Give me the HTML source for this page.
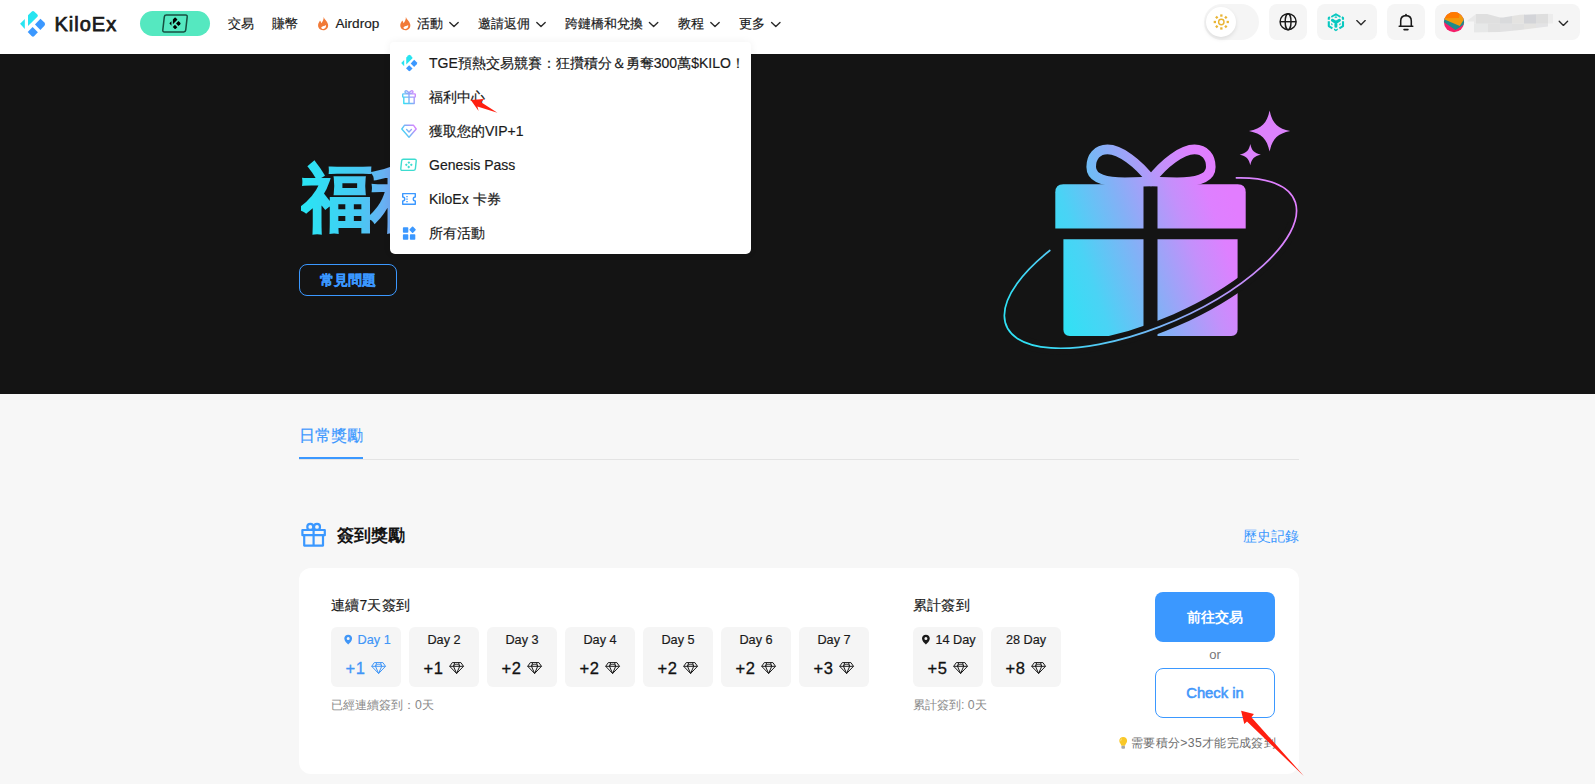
<!DOCTYPE html>
<html lang="zh-Hant">
<head>
<meta charset="utf-8">
<title>KiloEx</title>
<style>
*{box-sizing:border-box;margin:0;padding:0}
html,body{width:1595px;height:784px;overflow:hidden;background:#f7f7f7}
body{font-family:"Liberation Sans",sans-serif;color:#1a1a1a;position:relative;font-size:14px}
.abs{position:absolute}
.nav,.mi,.ct,.tile .d{-webkit-text-stroke:0.18px currentColor}
/* header */
#hdr{position:absolute;left:0;top:0;width:1595px;height:54px;background:#fff;z-index:5}
#brand{position:absolute;left:54.5px;top:12px;font-size:20px;font-weight:400;line-height:24px;color:#1a1a1a;letter-spacing:1px;-webkit-text-stroke:0.75px #1a1a1a}
#pill{position:absolute;left:140px;top:11px;width:70px;height:25px;border-radius:13px;background:#55e8c0}
.nav{position:absolute;top:14px;height:20px;line-height:20px;font-size:13px;color:#1a1a1a;white-space:nowrap}
.hbtn{position:absolute;top:4px;height:36px;border-radius:8px;background:#f5f5f5}
/* hero */
#hero{position:absolute;left:0;top:54px;width:1595px;height:340px;background:#141414}
#h1{position:absolute;left:300.5px;top:150px;font-size:71.5px;line-height:96px;font-weight:700;-webkit-text-stroke:1.7px transparent;white-space:nowrap;letter-spacing:-2.2px;background:linear-gradient(90deg,#28e6f4 0%,#48c8f3 21%,#74a8f3 33%,#d884fc 100%);-webkit-background-clip:text;background-clip:text;color:transparent}
#faq{position:absolute;left:299px;top:264px;width:98px;height:32px;border:1px solid #3b98ff;border-radius:8px;color:#3b98ff;-webkit-text-stroke:0.3px #3b98ff;font-weight:700;font-size:14px;line-height:30px;text-align:center}
/* menu */
#menu{position:absolute;left:390px;top:42px;width:361px;height:212px;background:#fff;border-radius:4px 4px 5px 5px;z-index:6;box-shadow:0 0 8px rgba(0,0,0,.06)}
.mi{position:absolute;left:39px;height:20px;line-height:20px;font-size:14px;color:#1a1a1a;white-space:nowrap}
/* content */
#tab{position:absolute;left:299px;top:425px;font-size:16px;line-height:22px;color:#3b98ff;-webkit-text-stroke:0.2px #3b98ff}
#tabu{position:absolute;left:299px;top:457px;width:64px;height:2px;background:#3b98ff}
#tabl{position:absolute;left:299px;top:459px;width:1000px;height:1px;background:#e4e4e4}
#sect{position:absolute;left:337.4px;top:523.5px;font-size:16.8px;line-height:24px;font-weight:700;color:#141414}
#hist{position:absolute;left:1243.3px;top:526.3px;font-size:14px;line-height:20px;color:#3b98ff}
#card{position:absolute;left:299px;top:568px;width:1000px;height:206px;background:#fff;border-radius:12px}
.ct{position:absolute;top:595px;font-size:14px;line-height:20px;color:#1a1a1a;letter-spacing:0.2px}
.tile{position:absolute;top:627px;width:70px;height:60px;border-radius:6px;background:#f5f5f5;text-align:center}
.tile .d{position:absolute;left:0;top:5px;width:70px;font-size:12.7px;line-height:16px;color:#1a1a1a;white-space:nowrap}
.tile .v{position:absolute;left:14.5px;top:30px;font-size:16.5px;line-height:22px;color:#111;white-space:nowrap;text-align:left;letter-spacing:0.5px;-webkit-text-stroke:0.3px currentColor}
.tile.on .d,.tile.on .v{color:#4096f7}
.sub{position:absolute;top:697px;font-size:12.3px;line-height:16px;color:#888}
#go{position:absolute;left:1155px;top:592px;width:120px;height:50px;border-radius:8px;background:#3b98ff;color:#fff;font-weight:700;font-size:14px;line-height:50px;text-align:center}
#or{position:absolute;left:1155px;top:646px;width:120px;text-align:center;font-size:13px;line-height:18px;color:#777}
#ck{position:absolute;left:1155px;top:668px;width:120px;height:50px;border-radius:8px;border:1px solid #3b98ff;background:#fff;color:#4297fa;font-weight:400;-webkit-text-stroke:0.55px #4297fa;font-size:14.8px;line-height:48px;text-align:center}
#hint{position:absolute;left:1131px;top:735px;font-size:12.25px;letter-spacing:0.33px;line-height:16px;color:#6e6e6e;white-space:nowrap}
</style>
</head>
<body>
<div id="hdr">
  <div id="brand">KiloEx</div>
  <div id="pill"></div>
  <div class="nav" style="left:228px">交易</div>
  <div class="nav" style="left:272px">賺幣</div>
  <div class="nav" style="left:335.5px;font-size:13.6px">Airdrop</div>
  <div class="nav" style="left:417px">活動</div>
  <div class="nav" style="left:478px">邀請返佣</div>
  <div class="nav" style="left:565px">跨鏈橋和兌換</div>
  <div class="nav" style="left:678px">教程</div>
  <div class="nav" style="left:739px">更多</div>

  <div class="hbtn" style="left:1204px;width:55px;border-radius:18px"></div>
  <div class="abs" style="left:1206px;top:7px;width:30px;height:30px;border-radius:50%;background:#fff;box-shadow:0 2px 4px rgba(0,0,0,.10)"></div>
  <div class="hbtn" style="left:1269px;width:38px"></div>
  <div class="hbtn" style="left:1317px;width:60px"></div>
  <div class="hbtn" style="left:1387px;width:38px"></div>
  <div class="hbtn" style="left:1435px;width:145px"></div>
</div>

<svg id="hsvg" class="abs" style="left:0;top:0;z-index:7" width="1595" height="54" viewBox="0 0 1595 54">
  <defs>
    <g id="klogo">
      <path d="M20.1,23.7 L24.8,19 L24.8,29 Z" fill="#27e4f0"/>
      <path d="M28,15.3 L31.6,11.7 Q33,10.4 34.4,11.7 L37.4,14.6 Q38.4,15.7 37.4,16.7 L28,26 Z" fill="#27e4f0"/>
      <path d="M35,24.4 L40.4,18.8 L44.4,22.6 Q45.9,24.2 44.4,25.8 L40.4,29.9 Z" fill="#3b98ff"/>
      <path d="M27.7,31.9 L32.6,27.1 L37.9,32.3 L34.3,36 Q33,37.3 31.6,36 Z" fill="#3b98ff"/>
    </g>
    <path id="chev" d="M0.8,0.8 L5,5 L9.2,0.8" fill="none" stroke="#2a2a2a" stroke-width="1.35" stroke-linecap="round" stroke-linejoin="round"/>
    <g id="flame">
      <path d="M5.9,-0.5 C6.4,1.8 9.4,3.6 10.2,6.6 C11,10 8.6,12.6 5.4,12.6 C2.2,12.6 0,10.4 0.3,7.2 C0.5,5.2 1.6,4.4 2.2,3 C2.9,3.8 3.3,4.6 3.5,5.6 C4.8,4.2 6,2 5.9,-0.5 Z" fill="#f17a38"/>
      <path d="M8.2,7.5 C8.5,9.7 7.4,11.4 5.6,11.4 C4.2,11.4 3.3,10.6 3.5,9.6 C4.8,8.5 6.8,8.7 8.2,7.5 Z" fill="#fff"/>
    </g>
  </defs>
  <use href="#klogo"/>
  <!-- pill icon -->
  <path d="M166.4,15 L185.6,15 Q187.4,15 187.2,16.8 L185.7,30.2 Q185.5,32 183.7,32 L164.4,32 Q162.6,32 162.8,30.2 L164.3,16.8 Q164.5,15 166.4,15 Z" fill="none" stroke="#174f41" stroke-width="1.5"/>
  <g transform="translate(160.3,12.6) scale(0.45)" >
    <path d="M20.1,23.7 L24.8,19 L24.8,29 Z" fill="#000"/>
    <path d="M28,15.3 L31.6,11.7 Q33,10.4 34.4,11.7 L37.4,14.6 Q38.4,15.7 37.4,16.7 L28,26 Z" fill="#000"/>
    <path d="M35,24.4 L40.4,18.8 L44.4,22.6 Q45.9,24.2 44.4,25.8 L40.4,29.9 Z" fill="#000"/>
    <path d="M27.7,31.9 L32.6,27.1 L37.9,32.3 L34.3,36 Q33,37.3 31.6,36 Z" fill="#000"/>
  </g>
  <use href="#flame" x="317.8" y="17.6"/>
  <use href="#flame" x="400" y="17.6"/>
  <use href="#chev" x="449" y="21.6"/>
  <use href="#chev" x="536" y="21.6"/>
  <use href="#chev" x="648.6" y="21.6"/>
  <use href="#chev" x="710" y="21.6"/>
  <use href="#chev" x="770.8" y="21.6"/>
  <!-- sun -->
  <g fill="#e9b433">
    <circle cx="1221.3" cy="22" r="2.7" fill="none" stroke="#e9b433" stroke-width="1.4"/>
    <rect x="1220.20" y="14.40" width="2.3" height="2.3"/><rect x="1220.20" y="27.30" width="2.3" height="2.3"/>
    <rect x="1213.70" y="20.85" width="2.3" height="2.3"/><rect x="1226.60" y="20.85" width="2.3" height="2.3"/>
    <rect x="1215.60" y="16.30" width="2.3" height="2.3" transform="rotate(45 1216.75 17.45)"/>
    <rect x="1224.70" y="16.30" width="2.3" height="2.3" transform="rotate(45 1225.85 17.45)"/>
    <rect x="1215.60" y="25.40" width="2.3" height="2.3" transform="rotate(45 1216.75 26.55)"/>
    <rect x="1224.70" y="25.40" width="2.3" height="2.3" transform="rotate(45 1225.85 26.55)"/>
  </g>
  <!-- globe -->
  <g fill="none" stroke="#1a1a1a" stroke-width="1.45">
    <circle cx="1288.1" cy="21.7" r="8"/>
    <ellipse cx="1288.1" cy="21.7" rx="2.9" ry="8"/>
    <path d="M1280.1,21.7 H1296.1"/>
  </g>
  <!-- bnb cube -->
  <g transform="translate(1335.9,21.8)" fill="none" stroke="#08c8c0" stroke-width="2.1" stroke-linejoin="round" stroke-linecap="butt">
    <path d="M-3.9,-5.3 L0,-7.6 L3.9,-5.3" stroke-width="1.9" stroke-linecap="round"/>
    <path d="M-7.1,-2 V-4 L-6,-4.7"/>
    <path d="M7.1,-2 V-4 L6,-4.7"/>
    <path d="M-7.1,-0.5 V4.3 L-3.5,6.5"/>
    <path d="M7.1,-0.5 V4.3 L3.5,6.5"/>
    <path d="M-3.5,-1.5 L0,0.6 L3.5,-1.5 M0,0.6 V4.4" stroke-width="3" stroke-linecap="round"/>
    <path d="M-1.2,-4.6 L0,-5.3 L1.2,-4.6 L0,-4.1 Z" fill="#08c8c0" stroke-width="0.5"/>
    <path d="M-1.9,6.7 L0,7.8 L1.9,6.7 V8.3 L0,9.4 L-1.9,8.3 Z" fill="#08c8c0" stroke="none"/>
    <ellipse cx="-4.1" cy="2.4" rx="0.7" ry="1.1" fill="#08c8c0" stroke="none" transform="rotate(-25 -4.1 2.4)"/>
    <ellipse cx="4.1" cy="2.4" rx="0.7" ry="1.1" fill="#08c8c0" stroke="none" transform="rotate(25 4.1 2.4)"/>
  </g>
  <use href="#chev" x="1356" y="19.8"/>
  <!-- bell -->
  <g fill="none" stroke="#1a1a1a" stroke-width="1.55" stroke-linecap="round" stroke-linejoin="round">
    <path d="M1399.2,26.3 H1412.8 M1400.7,26 V21 C1400.7,17.6 1403,15.6 1406,15.6 C1409,15.6 1411.3,17.6 1411.3,21 V26"/>
    <path d="M1406,15.4 V14.6"/>
    <path d="M1404,29.6 H1408"/>
  </g>
  <!-- avatar -->
  <clipPath id="avc"><circle cx="1454" cy="22.1" r="10.1"/></clipPath>
  <g clip-path="url(#avc)">
    <rect x="1443" y="11" width="23" height="23" fill="#f5206b"/>
    <path d="M1443,18 H1466 V22 L1464,24.6 L1455.4,29.9 L1443,21.4 Z" fill="#1f8a8c"/>
    <path d="M1440,8 H1468 V15 L1463.9,19.6 L1459.8,26 L1444,19.2 H1440 Z" fill="#f29a0c"/>
    <path d="M1440,8 H1459.7 L1459.5,13.8 L1459,18 L1444,18.2 H1440 Z" fill="#ff7a00"/>
  </g>
  <use href="#chev" x="1558.4" y="20.4"/>
  <!-- blurred address -->
  <clipPath id="blc"><path d="M1467.5,20.5 L1476,14 L1487,14 L1500,17.5 L1503,17.5 L1520,14.8 L1548,13.8 L1553,14 L1553,23.6 L1548,23.8 L1548,26.5 L1520,30 L1500,32 L1474,32.4 L1474,21.6 L1467.5,21.6 Z"/></clipPath>
  <g clip-path="url(#blc)">
    <rect x="1467" y="13.5" width="9" height="10.3" fill="#e9e9e9"/>
    <rect x="1476" y="13.5" width="24" height="10.3" fill="#dfdfdf"/>
    <rect x="1500" y="13.5" width="12" height="10.3" fill="#d9dadc"/>
    <rect x="1512" y="13.5" width="12" height="10.3" fill="#e4e3e1"/>
    <rect x="1524" y="13.5" width="12" height="10.3" fill="#d3d4d8"/>
    <rect x="1536" y="13.5" width="12" height="10.3" fill="#dedede"/>
    <rect x="1548" y="13.5" width="5" height="10.3" fill="#ececec"/>
    <rect x="1474" y="23.8" width="14" height="9" fill="#e7e8e8"/>
    <rect x="1488" y="23.8" width="12" height="9" fill="#e0e0e0"/>
    <rect x="1500" y="23.8" width="12" height="9" fill="#e1e1e2"/>
    <rect x="1512" y="23.8" width="12" height="9" fill="#e0e0e0"/>
    <rect x="1524" y="23.8" width="12" height="9" fill="#e4e3e1"/>
    <rect x="1536" y="23.8" width="12" height="9" fill="#e3e3e5"/>
  </g>
</svg>

<div id="hero">
</div>

<svg id="art" class="abs" style="left:980px;top:90px" width="340" height="290" viewBox="980 90 340 290">
  <defs>
    <linearGradient id="gg" gradientUnits="userSpaceOnUse" x1="1050" y1="322" x2="1250" y2="250">
      <stop offset="0" stop-color="#2ae5f4"/><stop offset="0.25" stop-color="#4ad3f5"/><stop offset="0.5" stop-color="#84b0f6"/><stop offset="0.75" stop-color="#c490fb"/><stop offset="0.9" stop-color="#de80ff"/><stop offset="1" stop-color="#e27dff"/>
    </linearGradient>
    <linearGradient id="rg" gradientUnits="userSpaceOnUse" x1="1030" y1="350" x2="1290" y2="215">
      <stop offset="0" stop-color="#2fe0f4"/><stop offset="0.42" stop-color="#74b6f6"/><stop offset="0.73" stop-color="#c090fa"/><stop offset="1" stop-color="#e07fff"/>
    </linearGradient>
  </defs>
  <!-- bow -->
  <g fill="none" stroke="url(#gg)" stroke-width="9.6" stroke-linejoin="round" stroke-linecap="round">
    <path d="M1151,180 C1138,163 1120,149.4 1107.5,149.4 C1097,149.4 1091.2,157 1091.2,167 C1091.2,178 1103,182.2 1125,182.2 L1151,181.5"/>
    <path d="M1151,180 C1164,163 1182,149.4 1194.5,149.4 C1205,149.4 1210.8,157 1210.8,167 C1210.8,178 1199,182.2 1177,182.2 L1151,181.5"/>
  </g>
  <!-- lid -->
  <path d="M1055.3,228.6 V192.2 Q1055.3,184.2 1063.3,184.2 H1143.5 V228.6 Z" fill="url(#gg)"/>
  <path d="M1157.5,228.6 V184.2 H1237.7 Q1245.7,184.2 1245.7,192.2 V228.6 Z" fill="url(#gg)"/>
  <!-- body -->
  <path d="M1063.4,239.2 H1143.5 V336 H1069.8 Q1063.4,336 1063.4,329.6 Z" fill="url(#gg)"/>
  <path d="M1157.5,239.2 H1237.6 V329.6 Q1237.6,336 1231.2,336 H1157.5 Z" fill="url(#gg)"/>
  <!-- front dark band -->
  <path d="M1294.3,223.2 A157.2,62.4 -23.7 0 1 1023.8,341.9" fill="none" stroke="#141414" stroke-width="12.4"/>
  <!-- ring -->
  <path d="M1236.4,177.9 A157.2,62.4 -23.7 1 1 1049.8,250.5" fill="none" stroke="url(#rg)" stroke-width="1.7" stroke-linecap="round"/>
  <!-- sparkles -->
  <path d="M1269.6,110.4 C1272.3,123.2 1277.4,128.3 1290.2,131 C1277.4,133.7 1272.3,138.8 1269.6,151.6 C1266.9,138.8 1261.8,133.7 1249.0,131 C1261.8,128.3 1266.9,123.2 1269.6,110.4 Z" fill="#dc82fc"/>
  <path d="M1250.3,144.1 C1251.7,150.7 1254.3,153.3 1260.9,154.7 C1254.3,156.1 1251.7,158.7 1250.3,165.3 C1248.9,158.7 1246.3,156.1 1239.7,154.7 C1246.3,153.3 1248.9,150.7 1250.3,144.1 Z" fill="#dc82fc"/>
</svg>
<div id="h1">福利中心</div>
<div id="faq">常見問題</div>
<div id="menu">

  <div class="mi" style="top:11px">TGE預熱交易競賽：狂攢積分＆勇奪300萬$KILO！</div>
  <div class="mi" style="top:45px">福利中心</div>
  <div class="mi" style="top:79px">獲取您的VIP+1</div>
  <div class="mi" style="top:113px">Genesis Pass</div>
  <div class="mi" style="top:147px">KiloEx 卡券</div>
  <div class="mi" style="top:181px">所有活動</div>
  <svg class="abs" style="left:0;top:0" width="361" height="212" viewBox="390 42 361 212">
    <defs>
      <linearGradient id="mg" gradientUnits="userSpaceOnUse" x1="402" y1="101" x2="416" y2="93"><stop offset="0" stop-color="#2fe3f4"/><stop offset="0.55" stop-color="#8aa9f7"/><stop offset="1" stop-color="#dd82ff"/></linearGradient>
      <linearGradient id="mg2" gradientUnits="userSpaceOnUse" x1="402" y1="135" x2="416" y2="127"><stop offset="0" stop-color="#2fe3f4"/><stop offset="0.55" stop-color="#8aa9f7"/><stop offset="1" stop-color="#dd82ff"/></linearGradient>
    </defs>
    <g transform="translate(388.3,47.8) scale(0.64)"><use href="#klogo"/></g>
    <!-- gift -->
    <g fill="none" stroke="url(#mg)" stroke-width="1.4" stroke-linejoin="round">
      <rect x="402.7" y="93.9" width="12.6" height="3.2" rx="0.6"/>
      <path d="M403.8,97.1 V103.5 H414.2 V97.1"/>
      <path d="M409,93.9 V103.5"/>
      <path d="M409,93.5 C407.8,90.6 405.4,90 405,91.6 C404.7,93 406.6,93.6 409,93.5 C411.4,93.6 413.3,93 413,91.6 C412.6,90 410.2,90.6 409,93.5 Z"/>
    </g>
    <!-- vip diamond -->
    <g fill="none" stroke="url(#mg2)" stroke-width="1.4" stroke-linejoin="round" stroke-linecap="round">
      <path d="M404.6,125.2 H413.4 L416.2,129 L409,137.2 L401.8,129 Z"/>
      <path d="M406.6,129.6 L409,132 L411.4,129.6"/>
    </g>
    <!-- genesis pass -->
    <g fill="none" stroke="#3ddcd0" stroke-width="1.4" stroke-linejoin="round">
      <path d="M403.3,159.2 H414.6 Q416.4,159.2 416.2,161 L415.4,168.6 Q415.2,170.4 413.4,170.4 H402.4 Q400.6,170.4 400.8,168.6 L401.6,161 Q401.8,159.2 403.3,159.2 Z"/>
    </g>
    <g fill="#3ddcd0">
      <rect x="407.9" y="161.6" width="2" height="2" transform="rotate(45 408.9 162.6)"/>
      <rect x="410.3" y="163.8" width="2" height="2" transform="rotate(45 411.3 164.8)"/>
      <rect x="405.3" y="163.8" width="2" height="2" transform="rotate(45 406.3 164.8)"/>
      <rect x="407.7" y="166" width="2" height="2" transform="rotate(45 408.7 167)"/>
    </g>
    <!-- ticket -->
    <g fill="none" stroke="#3b98ff" stroke-width="1.4" stroke-linejoin="round">
      <path d="M402.7,193.6 H415.3 V197 A2,2 0 0 0 415.3,201 V204.2 H402.7 V201 A2,2 0 0 0 402.7,197 Z"/>
      <path d="M407,196 V202.2" stroke-dasharray="1.2 1.3"/>
    </g>
    <!-- grid -->
    <g fill="#3b98ff">
      <rect x="402.9" y="227.3" width="5.4" height="5.4" rx="0.8"/>
      <rect x="402.9" y="234.3" width="5.4" height="5.4" rx="0.8"/>
      <rect x="409.9" y="234.3" width="5.4" height="5.4" rx="0.8"/>
      <rect x="410.1" y="227.2" width="5" height="5" rx="0.8" transform="rotate(45 412.6 229.7)"/>
    </g>
    <!-- red arrow -->
    <path d="M470.8,99.9 L484,99.1 L481.1,102.3 L497.4,112.7 L477.4,106.6 L478.6,111 Z" fill="#ff1f10"/>
  </svg>
</div>
<div id="tab">日常獎勵</div>
<div id="tabu"></div>
<div id="tabl"></div>
<div id="sect">簽到獎勵</div>
<div id="hist">歷史記錄</div>
<div id="card"></div>
<div class="ct" style="left:331px">連續7天簽到</div>
<div class="tile on" style="left:331px"><div class="d" style="left:8.2px">Day 1</div><div class="v">+1</div></div>
<div class="tile" style="left:409px"><div class="d">Day 2</div><div class="v">+1</div></div>
<div class="tile" style="left:487px"><div class="d">Day 3</div><div class="v">+2</div></div>
<div class="tile" style="left:565px"><div class="d">Day 4</div><div class="v">+2</div></div>
<div class="tile" style="left:643px"><div class="d">Day 5</div><div class="v">+2</div></div>
<div class="tile" style="left:721px"><div class="d">Day 6</div><div class="v">+2</div></div>
<div class="tile" style="left:799px"><div class="d">Day 7</div><div class="v">+3</div></div>
<div class="sub" style="left:331px">已經連續簽到：0天</div>
<div class="ct" style="left:913px">累計簽到</div>
<div class="tile" style="left:913px"><div class="d" style="left:7.5px">14 Day</div><div class="v">+5</div></div>
<div class="tile" style="left:991px"><div class="d">28 Day</div><div class="v">+8</div></div>
<div class="sub" style="left:913px">累計簽到: 0天</div>
<div id="go">前往交易</div>
<div id="or">or</div>
<div id="ck">Check in</div>

<svg id="csvg" class="abs" style="left:0;top:394px;z-index:4;pointer-events:none" width="1595" height="390" viewBox="0 394 1595 390">
  <defs>
    <g id="dia" fill="none" stroke-width="1" stroke-linejoin="round">
      <path d="M3.2,0.6 H11.8 L14.4,4.3 L7.5,11.5 L0.6,4.3 Z"/>
      <path d="M0.6,4.3 H14.4"/>
      <path d="M5.6,0.6 L4.4,4.3 L7.5,11.5 L10.6,4.3 L9.4,0.6"/>
      <path d="M4.4,4.3 C5,1.6 10,1.6 10.6,4.3"/>
    </g>
    <path id="pin" d="M3.9,0 C6.1,0 7.8,1.7 7.8,3.8 C7.8,6.2 5.4,8.4 3.9,9.8 C2.4,8.4 0,6.2 0,3.8 C0,1.7 1.7,0 3.9,0 Z M3.9,2.3 A1.5,1.5 0 1 0 3.9,5.3 A1.5,1.5 0 1 0 3.9,2.3 Z" fill-rule="evenodd"/>
  </defs>
  <!-- section gift icon -->
  <g fill="none" stroke="#3b98ff" stroke-width="2.2" stroke-linejoin="round">
    <rect x="302.4" y="530" width="22.4" height="5.2"/>
    <path d="M304.2,535.2 V545.6 H323 V535.2"/>
    <path d="M313.6,530 V545.6"/>
    <circle cx="310.3" cy="526.9" r="3"/><circle cx="317" cy="526.9" r="3"/>
  </g>
  <use href="#pin" x="344.3" y="634.8" fill="#4096f7"/>
  <use href="#pin" x="922" y="634.8" fill="#1a1a1a"/>
  <use href="#dia" x="371.1" y="662" stroke="#4096f7"/>
  <use href="#dia" x="449.1" y="662" stroke="#1a1a1a"/>
  <use href="#dia" x="527.1" y="662" stroke="#1a1a1a"/>
  <use href="#dia" x="605.1" y="662" stroke="#1a1a1a"/>
  <use href="#dia" x="683.1" y="662" stroke="#1a1a1a"/>
  <use href="#dia" x="761.1" y="662" stroke="#1a1a1a"/>
  <use href="#dia" x="839.1" y="662" stroke="#1a1a1a"/>
  <use href="#dia" x="953.1" y="662" stroke="#1a1a1a"/>
  <use href="#dia" x="1031.1" y="662" stroke="#1a1a1a"/>
  <!-- bulb -->
  <g>
    <path d="M1123.2,736.9 C1125.5,736.9 1127.1,738.6 1127.1,740.8 C1127.1,742.9 1125.4,743.8 1125,745.7 H1121.4 C1121,743.8 1119.3,742.9 1119.3,740.8 C1119.3,738.6 1120.9,736.9 1123.2,736.9 Z" fill="#f9c828"/>
    <path d="M1122,738.6 C1121,739.2 1120.6,740.2 1120.8,741.2" fill="none" stroke="#fde58a" stroke-width="1"/>
    <rect x="1121.4" y="745.8" width="3.6" height="2.9" rx="0.9" fill="#a8a8a8"/>
  </g>
  <!-- red arrow -->
  <path d="M1241.1,710.7 L1253.9,714.1 L1251.4,717.2 L1303.8,775.9 L1247,721.6 L1244.3,724.1 Z" fill="#ff1f10"/>
</svg>
<div id="hint">需要積分&gt;35才能完成簽到</div>
</body>
</html>
